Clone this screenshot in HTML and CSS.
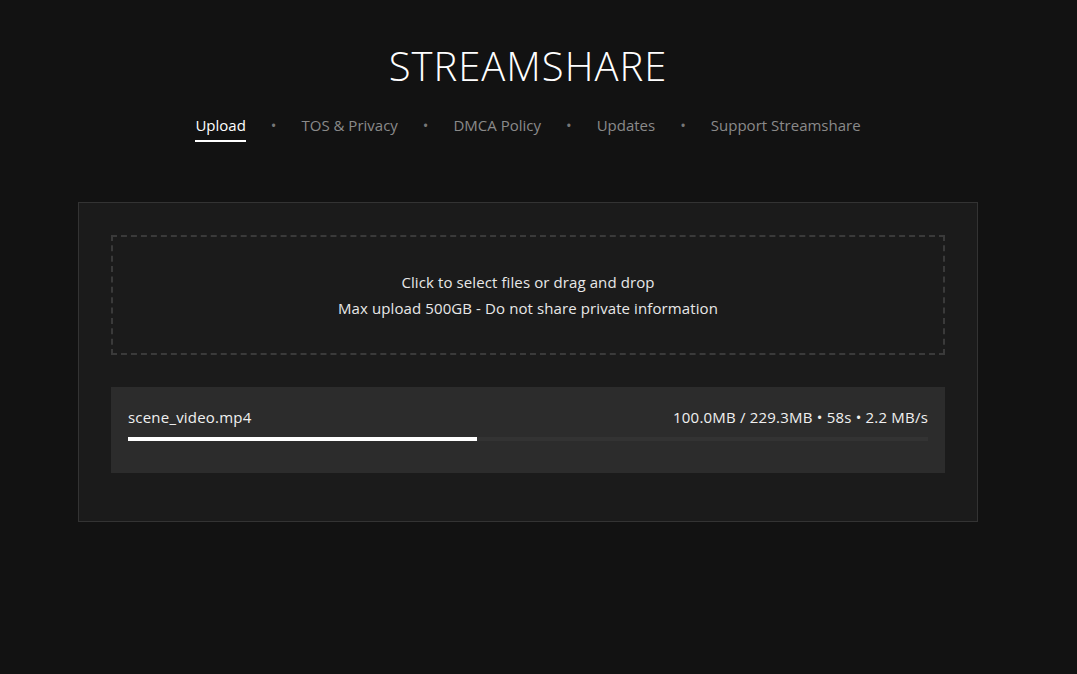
FILE: index.html
```html
<!DOCTYPE html>
<html>
<head>
<meta charset="utf-8">
<link rel="stylesheet" href="styles.css">
</head>
<body>
<div class="page">
  <header class="header">
    <h1 class="title">STREAMSHARE</h1>
    <nav class="nav">
      <a class="nav-link active">Upload</a>
      <span class="dot">•</span>
      <a class="nav-link">TOS &amp; Privacy</a>
      <span class="dot">•</span>
      <a class="nav-link">DMCA Policy</a>
      <span class="dot">•</span>
      <a class="nav-link">Updates</a>
      <span class="dot">•</span>
      <a class="nav-link">Support Streamshare</a>
    </nav>
  </header>
  <main class="card">
    <div class="dropzone">
      <div>Click to select files or drag and drop</div>
      <div>Max upload 500GB - Do not share private information</div>
    </div>
    <div class="file-row">
      <div class="file-head">
        <span class="file-name">scene_video.mp4</span>
        <span class="file-stats">100.0MB / 229.3MB • 58s • 2.2 MB/s</span>
      </div>
      <div class="track"><div class="fill" style="width:43.6%"></div></div>
    </div>
  </main>
</div>
</body>
</html>
```
FILE: styles.css
```css
html, body {
  margin: 0;
  padding: 0;
  background: #121212;
  color: #e6e6e6;
  font-family: "Open Sans", "Noto Sans", sans-serif;
}
.page {
  width: 900px;
  margin-left: 78px;
}
.header {
  display: flex;
  flex-direction: column;
  align-items: center;
}
.title {
  margin: 42px 0 0 0;
  font-weight: 300;
  font-size: 40px;
  line-height: 48px;
  letter-spacing: 1px;
  color: #ffffff;
}
.nav {
  display: flex;
  align-items: center;
  gap: 25px;
  margin-top: 25px;
  font-size: 15px;
}
.nav-link {
  color: #8a8a8a;
  padding-bottom: 5px;
  border-bottom: 2px solid transparent;
  line-height: 20px;
}
.nav-link.active {
  color: #ffffff;
  border-bottom-color: #ffffff;
}
.dot {
  color: #777;
  font-size: 15px;
  padding-bottom: 7px;
}
.card {
  margin-top: 60px;
  background: #1b1b1b;
  border: 1px solid #333333;
  padding: 32px 32px 48px 32px;
  height: 238px;
}
.dropzone {
  border: 2px dashed #3a3a3a;
  height: 116px;
  display: flex;
  flex-direction: column;
  justify-content: center;
  align-items: center;
  gap: 4px;
  font-size: 15px;
  letter-spacing: 0.1px;
  color: #e8e8e8;
  line-height: 22px;
}
.file-row {
  margin-top: 32px;
  background: #2c2c2c;
  height: 86px;
  padding: 0 17px;
  box-sizing: border-box;
  display: flex;
  flex-direction: column;
}
.file-head {
  display: flex;
  justify-content: space-between;
  margin-top: 19px;
  font-size: 15px;
  letter-spacing: 0.2px;
  line-height: 22px;
  color: #f0f0f0;
}
.track {
  margin-top: 9px;
  height: 4px;
  background: #333333;
}
.fill {
  height: 4px;
  background: #ffffff;
}
```
